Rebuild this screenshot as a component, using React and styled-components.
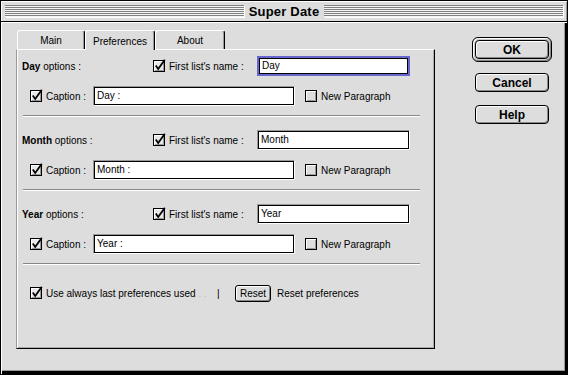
import styled, { createGlobalStyle } from 'styled-components';

const GlobalStyle = createGlobalStyle`
    html, body {
        margin: 0;
        padding: 0;
        background: #dddddd;
    }
    body {
        font-family: "Liberation Sans", Arial, sans-serif;
        font-size: 10px;
        color: #000;
    }
`;

const Window = styled.div`
    width: 568px;
    height: 375px;
    box-sizing: border-box;
    border: 1px solid #000;
    background: #dddddd;
    display: flex;
    flex-direction: column;
`;

const TitleBar = styled.div`
    height: 20px;
    flex: none;
    border-bottom: 1px solid #000;
    box-shadow: inset 1px 1px 0 #fff, inset -1px 0 0 #999;
    display: flex;
    align-items: center;
    gap: 3px;
    padding: 0 4px;
`;

const Stripes = styled.div`
    flex: 1;
    height: 12px;
    background: repeating-linear-gradient(to bottom, #808080 0 1px, #f4f4f4 1px 2px);
    box-shadow: 1px 1px 0 #fff;
`;

const Title = styled.div`
    font-family: "Liberation Sans", Arial, sans-serif;
    font-weight: bold;
    font-size: 13px;
    padding: 0 2px;
    letter-spacing: 0.2px;
`;

const Body = styled.div`
    flex: 1;
    display: flex;
    align-items: flex-start;
    gap: 37px;
    padding: 8px 0 0 15px;
    box-shadow: inset 1px 1px 0 #fff, inset -2px -3px 0 #000, inset -3px -4px 0 #999;
`;

const TabArea = styled.div`
    width: 419px;
    display: flex;
    flex-direction: column;
`;

const TabRow = styled.div`
    display: flex;
    padding-left: 1px;
    height: 19px;
`;

const Tab = styled.div`
    width: ${(p) => p.$w}px;
    height: ${(p) => (p.$active ? 20 : 19)}px;
    margin-bottom: ${(p) => (p.$active ? -1 : 0)}px;
    box-sizing: border-box;
    border-top: 1px solid #fff;
    border-left: 1px solid #fff;
    border-right: 1px solid #000;
    border-radius: 3px 3px 0 0;
    box-shadow: inset -1px 0 0 #999;
    background: #dddddd;
    display: flex;
    align-items: center;
    justify-content: center;
    padding-top: 1px;
    position: relative;
    z-index: ${(p) => (p.$active ? 1 : 0)};
`;

const Panel = styled.div`
    height: 300px;
    box-sizing: border-box;
    border-top: 1px solid #fff;
    border-left: 1px solid #999;
    border-right: 1px solid #000;
    border-bottom: 1px solid #000;
    box-shadow: inset 1px 0 0 #fff, inset -1px -1px 0 #aaa;
    padding-top: 6px;
    display: flex;
    flex-direction: column;
`;

const HeaderRow = styled.div`
    height: 20px;
    display: grid;
    grid-template-columns: 131px 104px 153px;
    align-items: center;
    padding-left: 5px;
`;

const CaptionRow = styled.div`
    height: 20px;
    margin-top: 10px;
    display: grid;
    grid-template-columns: 63px 212px auto;
    align-items: center;
    padding-left: 13px;
`;

const Separator = styled.div`
    height: 0;
    border-top: 1px solid #888;
    border-bottom: 1px solid #fff;
    margin: 9px 14px 13px 6px;
`;

const BottomRow = styled.div`
    height: 20px;
    margin-top: 5px;
    display: grid;
    grid-template-columns: 187px 18px 36px auto;
    align-items: center;
    padding-left: 13px;
`;

const Label = styled.span`
    white-space: nowrap;
    b {
        font-weight: bold;
    }
`;

const Check = styled.label`
    display: inline-flex;
    align-items: center;
    gap: 3px;
    white-space: nowrap;
`;

const Field = styled.div`
    box-sizing: border-box;
    width: ${(p) => p.$w}px;
    height: 20px;
    display: flex;
    border: ${(p) => (p.$focus ? '2px solid #6666cc' : '1px solid')};
    border-color: ${(p) => (p.$focus ? '#6666cc' : '#999 #fff #fff #999')};

    span {
        flex: 1;
        border: 1px solid #000;
        background: #fff;
        padding: 0 2px;
        line-height: ${(p) => (p.$focus ? 14 : 16)}px;
        white-space: nowrap;
        overflow: hidden;
    }
`;

const Dots = styled.span`
    color: #bbb;
    letter-spacing: 2px;
`;

const ButtonColumn = styled.div`
    width: 80px;
    margin-top: 7px;
    display: flex;
    flex-direction: column;
    align-items: center;
    gap: 11px;
`;

const DefaultRing = styled.div`
    box-sizing: border-box;
    width: 80px;
    height: 25px;
    border: 1px solid #000;
    border-radius: 6px;
    padding: 2px;
    background: #c8c8c8;
    box-shadow: inset 1px 1px 0 #fff, inset -1px -1px 0 #888;
`;

const Button = styled.div`
    box-sizing: border-box;
    width: ${(p) => p.$w || 74}px;
    height: ${(p) => p.$h || 19}px;
    margin-top: ${(p) => p.$mt || 0}px;
    border: 1px solid #000;
    border-radius: ${(p) => (p.$small ? 3 : 4)}px;
    background: #dddddd;
    box-shadow: inset 1px 1px 0 #fff, inset -1px -1px 0 #888;
    display: flex;
    align-items: center;
    justify-content: center;
    font-weight: ${(p) => (p.$small ? 'normal' : 'bold')};
    font-size: ${(p) => (p.$small ? 10 : 12)}px;
`;

const CheckBox = ({ checked }) => (
    <svg width="13" height="14" viewBox="0 0 13 14">
        <rect x="0.5" y="1.5" width="11" height="11" fill={checked ? '#e8e8e8' : '#dddddd'} stroke="#000" />
        <path d="M1.5 11.5 V2.5 H10.5" stroke="#fff" fill="none" />
        <path d="M2 11.5 H10.5 V3" stroke="#999" fill="none" />
        {checked && (
            <path d="M2.8 6.6 L5.2 10 L11.8 0.8" stroke="#000" strokeWidth="1.8" fill="none" />
        )}
    </svg>
);

const Section = ({ name, focus }) => (
    <>
        <HeaderRow>
            <Label>
                <b>{name}</b> options :
            </Label>
            <Check>
                <CheckBox checked />
                First list's name :
            </Check>
            <Field $w={153} $focus={focus}>
                <span>{name}</span>
            </Field>
        </HeaderRow>
        <CaptionRow>
            <Check>
                <CheckBox checked />
                Caption :
            </Check>
            <Field $w={202}>
                <span>{name} :</span>
            </Field>
            <Check>
                <CheckBox />
                New Paragraph
            </Check>
        </CaptionRow>
        <Separator />
    </>
);

const App = () => {
    return (
        <>
            <GlobalStyle />
            <Window>
                <TitleBar>
                    <Stripes />
                    <Title>Super Date</Title>
                    <Stripes />
                </TitleBar>
                <Body>
                    <TabArea>
                        <TabRow>
                            <Tab $w={68}>Main</Tab>
                            <Tab $w={70} $active>
                                Preferences
                            </Tab>
                            <Tab $w={70}>About</Tab>
                        </TabRow>
                        <Panel>
                            <Section name="Day" focus />
                            <Section name="Month" />
                            <Section name="Year" />
                            <BottomRow>
                                <Check>
                                    <CheckBox checked />
                                    Use always last preferences used <Dots>..</Dots>
                                </Check>
                                <Label>|</Label>
                                <Button $w={36} $h={17} $small>
                                    Reset
                                </Button>
                                <Label style={{ marginLeft: 6 }}>Reset preferences</Label>
                            </BottomRow>
                        </Panel>
                    </TabArea>
                    <ButtonColumn>
                        <DefaultRing>
                            <Button>OK</Button>
                        </DefaultRing>
                        <Button>Cancel</Button>
                        <Button $mt={2}>Help</Button>
                    </ButtonColumn>
                </Body>
            </Window>
        </>
    );
};

export default App;
